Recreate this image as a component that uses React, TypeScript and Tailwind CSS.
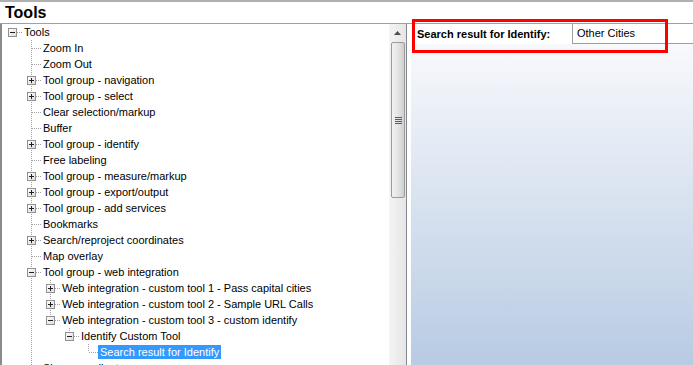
import React from 'react'

interface TreeNode {
  label: string
  children?: TreeNode[]
  collapsed?: boolean
  selected?: boolean
}

interface FlatRow {
  node: TreeNode
  depth: number
  guides: boolean[]
  last: boolean
  first: boolean
}

const group = (label: string): TreeNode => ({ label, collapsed: true, children: [] })

const tree: TreeNode[] = [
  {
    label: 'Tools',
    children: [
      { label: 'Zoom In' },
      { label: 'Zoom Out' },
      group('Tool group - navigation'),
      group('Tool group - select'),
      { label: 'Clear selection/markup' },
      { label: 'Buffer' },
      group('Tool group - identify'),
      { label: 'Free labeling' },
      group('Tool group - measure/markup'),
      group('Tool group - export/output'),
      group('Tool group - add services'),
      { label: 'Bookmarks' },
      group('Search/reproject coordinates'),
      { label: 'Map overlay' },
      {
        label: 'Tool group - web integration',
        children: [
          group('Web integration - custom tool 1 - Pass capital cities'),
          group('Web integration - custom tool 2 - Sample URL Calls'),
          {
            label: 'Web integration - custom tool 3 - custom identify',
            children: [
              {
                label: 'Identify Custom Tool',
                children: [{ label: 'Search result for Identify', selected: true }],
              },
            ],
          },
        ],
      },
      { label: 'Show coordinates' },
      { label: 'Print' },
    ],
  },
]

function flatten(nodes: TreeNode[], depth: number, guides: boolean[], out: FlatRow[]) {
  nodes.forEach((node, i) => {
    const last = i === nodes.length - 1
    out.push({ node, depth, guides, last, first: depth === 0 && i === 0 })
    if (node.children && !node.collapsed) {
      flatten(node.children, depth + 1, [...guides, !last], out)
    }
  })
  return out
}

const LINE = '#a0a0a0'

function GuideColumn({ show }: { show: boolean }) {
  return (
    <svg width="19" height="16" className="shrink-0 block">
      {show && <line x1="9.5" y1="0" x2="9.5" y2="16" stroke={LINE} strokeDasharray="1 1" />}
    </svg>
  )
}

function ConnectorColumn({ row }: { row: FlatRow }) {
  const hasKids = !!row.node.children
  const top = !row.first
  return (
    <svg width="19" height="16" className="shrink-0 block">
      {top && <line x1="9.5" y1="0" x2="9.5" y2="8" stroke={LINE} strokeDasharray="1 1" />}
      {!row.last && <line x1="9.5" y1="8" x2="9.5" y2="16" stroke={LINE} strokeDasharray="1 1" />}
      <line x1="10" y1="8.5" x2="19" y2="8.5" stroke={LINE} strokeDasharray="1 1" />
      {hasKids && (
        <g>
          <defs>
            <linearGradient id="exp" x1="0" y1="0" x2="1" y2="1">
              <stop offset="0" stopColor="#ffffff" />
              <stop offset="1" stopColor="#dcdcdc" />
            </linearGradient>
          </defs>
          <rect x="5.5" y="4.5" width="8" height="8" fill="url(#exp)" stroke="#919191" />
          <line x1="7" y1="8.5" x2="12" y2="8.5" stroke="#1f1f1f" />
          {row.node.collapsed && <line x1="9.5" y1="6" x2="9.5" y2="11" stroke="#1f1f1f" />}
        </g>
      )}
    </svg>
  )
}

function Scrollbar() {
  return (
    <div className="w-[17px] shrink-0 flex flex-col bg-gradient-to-r from-[#f4f4f4] to-[#e6e6e6]">
      <div className="h-[18px] flex items-center justify-center">
        <svg width="7" height="4">
          <polygon points="0,4 3.5,0 7,4" fill="#4d4d4d" />
        </svg>
      </div>
      <div className="ml-[2px] mr-px h-[156px] rounded-[2px] border border-[#9a9a9a] bg-gradient-to-r from-[#f2f2f2] via-[#e4e4e4] to-[#cfcfcf] flex flex-col items-center justify-center">
        <div className="flex flex-col gap-[1px]">
          <div className="w-[7px] h-px bg-[#5a5a5a]" />
          <div className="w-[7px] h-px bg-[#5a5a5a]" />
          <div className="w-[7px] h-px bg-[#5a5a5a]" />
          <div className="w-[7px] h-px bg-[#5a5a5a]" />
        </div>
      </div>
      <div className="flex-1" />
    </div>
  )
}

export default function App() {
  const rows = flatten(tree, 0, [], [])

  return (
    <div
      className="relative w-[693px] h-[365px] overflow-hidden bg-white flex flex-col"
      style={{ fontFamily: '"Liberation Sans", Arial, sans-serif' }}
    >
      <div className="h-[2px] bg-[#b0b0b0] shrink-0" />
      <div className="h-[22px] shrink-0 border-b border-[#a0a0a0] pl-[5px] text-[16px] font-bold leading-[21px] text-black">
        Tools
      </div>

      <div className="flex flex-1 min-h-0">
        {/* Tree panel */}
        <div className="w-[407px] shrink-0 flex border-l-2 border-l-[#8a8a8a] border-r border-r-[#828790]">
          <div className="flex-1 pl-px overflow-hidden">
            {rows.map((row, i) => (
              <div key={i} className="flex h-[16px] items-center">
                {row.guides.map((g, j) => (
                  <GuideColumn key={j} show={g} />
                ))}
                <ConnectorColumn row={row} />
                {row.node.selected ? (
                  <span className="h-[14px] px-[2px] inline-flex items-center bg-[#3399ff] text-white text-[11px] whitespace-nowrap">
                    {row.node.label}
                  </span>
                ) : (
                  <span className="px-[2px] text-[11px] text-black whitespace-nowrap leading-[16px]">
                    {row.node.label}
                  </span>
                )}
              </div>
            ))}
          </div>
          <Scrollbar />
        </div>

        <div className="w-[4px] shrink-0" />

        {/* Result panel */}
        <div className="flex-1 flex flex-col">
          <div className="h-[20px] shrink-0 flex bg-white">
            <div className="w-[161px] shrink-0 pl-[6px] flex items-center text-[11px] font-bold text-black whitespace-nowrap">
              Search result for Identify:
            </div>
            <div className="flex-1 border-l border-b border-[#a0a0a0] pl-[4px] flex items-center text-[11px] text-black">
              Other Cities
            </div>
          </div>
          <div className="flex-1 bg-gradient-to-b from-[#f8f9fc] to-[#b8cbe3]" />
        </div>
      </div>

      {/* highlight annotation */}
      <div className="absolute left-[412px] top-[19px] w-[256px] h-[34px] border-[3px] border-[#ff0000]" />
    </div>
  )
}
